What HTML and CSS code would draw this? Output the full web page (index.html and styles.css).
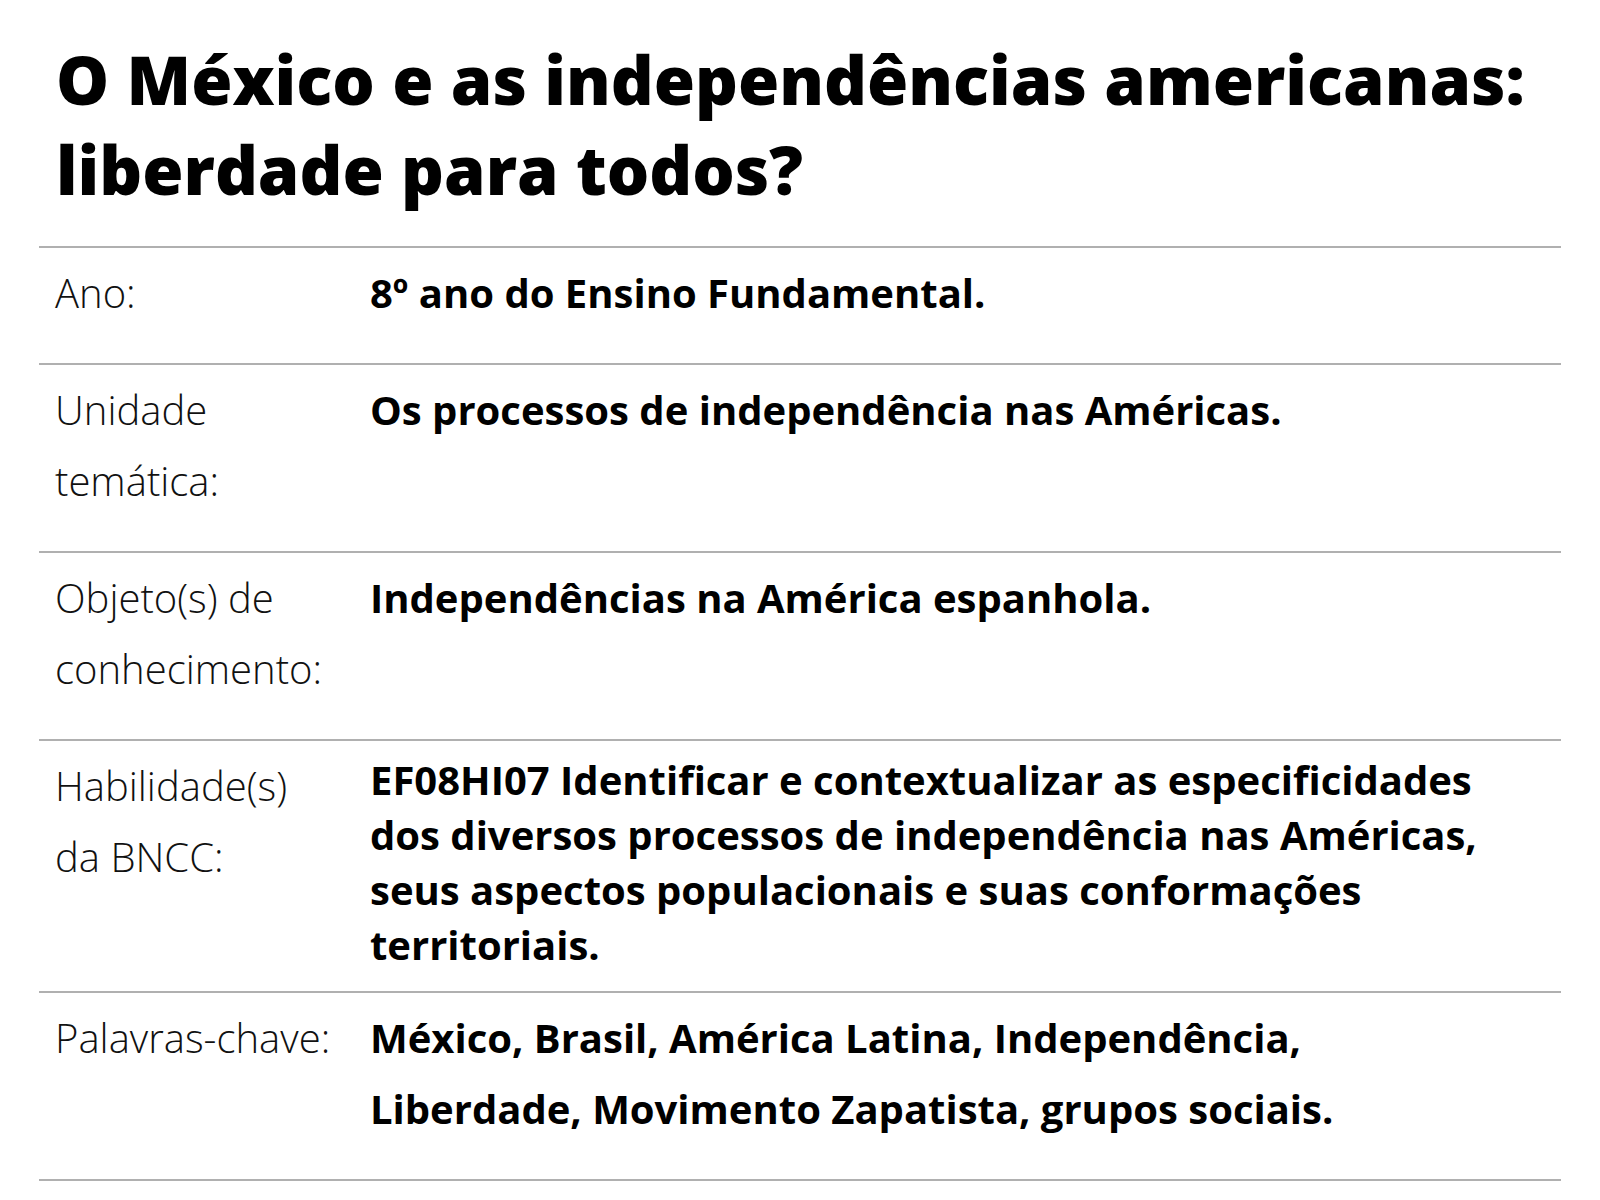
FILE: index.html
```html
<!DOCTYPE html>
<html lang="pt-BR">
<head>
<meta charset="utf-8">
<title>O México e as independências americanas</title>
<link rel="stylesheet" href="styles.css">
</head>
<body>
<main class="page">
  <h1 class="title">O México e as independências americanas:<br>liberdade para todos?</h1>
  <table class="info">
    <tbody>
      <tr>
        <th class="label">Ano:</th>
        <td class="value">8º ano do Ensino Fundamental.</td>
      </tr>
      <tr>
        <th class="label">Unidade<br>temática:</th>
        <td class="value">Os processos de independência nas Américas.</td>
      </tr>
      <tr>
        <th class="label">Objeto(s) de<br>conhecimento:</th>
        <td class="value">Independências na América espanhola.</td>
      </tr>
      <tr>
        <th class="label">Habilidade(s)<br>da BNCC:</th>
        <td class="value value-dense">EF08HI07 Identificar e contextualizar as especificidades<br>dos diversos processos de independência nas Américas,<br>seus aspectos populacionais e suas conformações<br>territoriais.</td>
      </tr>
      <tr>
        <th class="label">Palavras-chave:</th>
        <td class="value">México, Brasil, América Latina, Independência,<br>Liberdade, Movimento Zapatista, grupos sociais.</td>
      </tr>
    </tbody>
  </table>
</main>
</body>
</html>
```

FILE: styles.css
```css
html, body {
  margin: 0;
  padding: 0;
  background: #ffffff;
}

body {
  font-family: "Open Sans", "Noto Sans", "Liberation Sans", sans-serif;
  color: #000000;
}

.page {
  padding: 35px 39px 0 39px;
}

.title {
  margin: 0 0 31px 17px;
  font-size: 66.8px;
  line-height: 90px;
  font-weight: 800;
  color: #000;
  white-space: nowrap;
}

.info {
  width: 1522px;
  border-collapse: collapse;
  table-layout: fixed;
  border-top: 2px solid #b0b0b0;
}

.info tr {
  border-bottom: 2px solid #b0b0b0;
}

.label {
  width: 316px;
  box-sizing: border-box;
  padding: 9px 0 35px 16px;
  text-align: left;
  vertical-align: top;
  font-weight: 300;
  font-size: 40px;
  line-height: 71px;
  color: #111;
  white-space: nowrap;
}

.value {
  padding: 9px 0 35px 15px;
  vertical-align: top;
  font-weight: 700;
  font-size: 40px;
  line-height: 71px;
  color: #000;
  white-space: nowrap;
}

.value-dense {
  line-height: 55px;
  padding-top: 11px;
  padding-bottom: 19px;
}
```
